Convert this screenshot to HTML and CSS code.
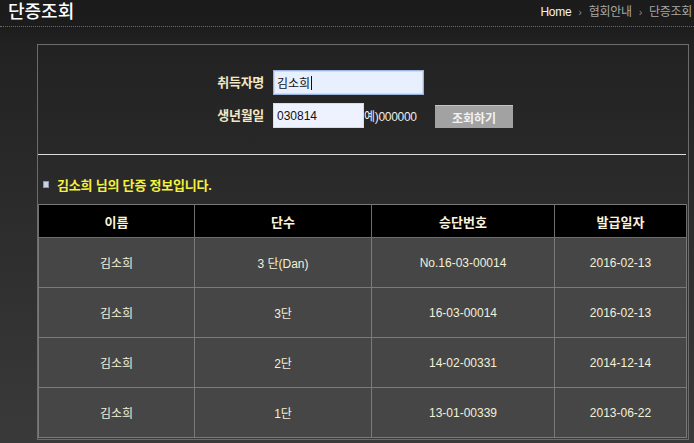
FILE: index.html
```html
<!DOCTYPE html>
<html lang="ko">
<head>
<meta charset="utf-8">
<title>단증조회</title>
<link rel="stylesheet" href="styles.css">
</head>
<body>
<header class="top">
  <h1 class="title">단증조회</h1>
  <nav class="crumbs">
    <span class="home">Home</span><span class="sep">›</span><span>협회안내</span><span class="sep">›</span><span>단증조회</span>
  </nav>
</header>
<main class="wrap">
  <section class="box">
    <form class="search">
      <div class="row">
        <label class="lbl">취득자명</label>
        <div class="inp inp-name"><span>김소희</span><span class="caret"></span></div>
      </div>
      <div class="row">
        <label class="lbl">생년월일</label>
        <div class="inp inp-birth">030814</div>
        <span class="hint">예)000000</span>
        <button type="button" class="btn">조회하기</button>
      </div>
    </form>
    <div class="result-head">
      <span class="bullet"></span>
      <span class="result-title">김소희 님의 단증 정보입니다.</span>
    </div>
    <table class="grid">
      <colgroup>
        <col class="c1"><col class="c2"><col class="c3"><col class="c4">
      </colgroup>
      <thead>
        <tr><th>이름</th><th>단수</th><th>승단번호</th><th>발급일자</th></tr>
      </thead>
      <tbody>
        <tr><td>김소희</td><td>3 단(Dan)</td><td>No.16-03-00014</td><td>2016-02-13</td></tr>
        <tr><td>김소희</td><td>3단</td><td>16-03-00014</td><td>2016-02-13</td></tr>
        <tr><td>김소희</td><td>2단</td><td>14-02-00331</td><td>2014-12-14</td></tr>
        <tr><td>김소희</td><td>1단</td><td>13-01-00339</td><td>2013-06-22</td></tr>
      </tbody>
    </table>
  </section>
</main>
</body>
</html>
```
FILE: styles.css
```css
* { box-sizing: border-box; }
html, body { margin: 0; padding: 0; }
body {
  width: 694px;
  height: 443px;
  overflow: hidden;
  font-family: "Liberation Sans", "Noto Sans CJK KR", sans-serif;
  font-size: 12px;
  color: #eee;
  background: linear-gradient(to bottom, #1b1b1b 0, #1c1c1c 27px, #222 45px, #2b2b2b 200px, #3a3a3a 443px);
}
.top {
  height: 27px;
  display: flex;
  align-items: center;
  justify-content: space-between;
  padding: 0 2px 2px 8px;
  border-bottom: 1px dotted #6a6a6a;
}
.title {
  margin: 0;
  font-size: 18px;
  font-weight: 500;
  line-height: 20px;
  color: #fff;
}
.crumbs {
  display: flex;
  align-items: center;
  gap: 7px;
  font-size: 12px;
  line-height: 14px;
  color: #a8a8a8;
  letter-spacing: -0.3px;
}
.crumbs .home { color: #f4f4f4; }
.crumbs .sep { color: #888; font-size: 11px; }
.wrap {
  padding: 17px 5px 0 37px;
}
.box {
  border: 1px solid #6c6c6c;
  padding: 0 2px 1px 0;
  height: 396px;
}
.search {
  display: flex;
  flex-direction: column;
  gap: 8px;
  padding: 25px 0 26px 174px;
  border-bottom: 1px solid #dcdcdc;
}
.row {
  display: flex;
  align-items: center;
  height: 25px;
}
.lbl {
  width: 52px;
  margin-right: 9px;
  text-align: right;
  font-size: 13px;
  font-weight: bold;
  color: #f1e6c6;
  letter-spacing: -0.3px;
  line-height: 16px;
}
.inp {
  height: 25px;
  display: flex;
  align-items: center;
  padding: 0 3px;
  color: #111;
  font-size: 12px;
  background: #e9f0fd;
}
.inp-name {
  width: 151px;
  border: 1px solid #9ab4de;
  box-shadow: inset 0 0 0 1px #cfdcf3;
}
.caret {
  display: inline-block;
  width: 1px;
  height: 14px;
  margin-left: 1px;
  background: #111;
}
.inp-birth {
  width: 91px;
  background: #eef2fe;
  border: 1px solid #d7dde8;
}
.hint {
  width: 71px;
  color: #ececec;
  font-size: 12px;
  letter-spacing: -0.3px;
}
.btn {
  width: 78px;
  height: 23px;
  margin-top: 2px;
  border: none;
  border-top: 1px solid #c4c4c4;
  background: #a2a2a2;
  color: #f2f2f2;
  font-family: inherit;
  font-size: 12px;
  font-weight: bold;
  padding: 0;
}
.result-head {
  height: 49px;
  display: flex;
  align-items: center;
  padding: 9px 0 0 5px;
}
.bullet {
  width: 6px;
  height: 7px;
  background: #c9d0e6;
  border: 1px solid #8d95ad;
  margin-right: 8px;
}
.result-title {
  font-size: 13px;
  font-weight: bold;
  color: #f6f13a;
  letter-spacing: -0.2px;
}
.grid {
  width: 648px;
  border-collapse: collapse;
  table-layout: fixed;
  border: 1px solid #7a7a7a;
}
.c1 { width: 156px; }
.c2 { width: 177px; }
.c3 { width: 183px; }
.c4 { width: 132px; }
.grid th {
  height: 33px;
  background: #000;
  color: #fbf3dc;
  font-size: 13px;
  font-weight: bold;
  border: 1px solid #6e6e6e;
  border-top: none;
}
.grid td {
  height: 50px;
  background: #464646;
  color: #f2f0d8;
  text-align: center;
  font-size: 12px;
  border: 1px solid #7a7a7a;
}
```
